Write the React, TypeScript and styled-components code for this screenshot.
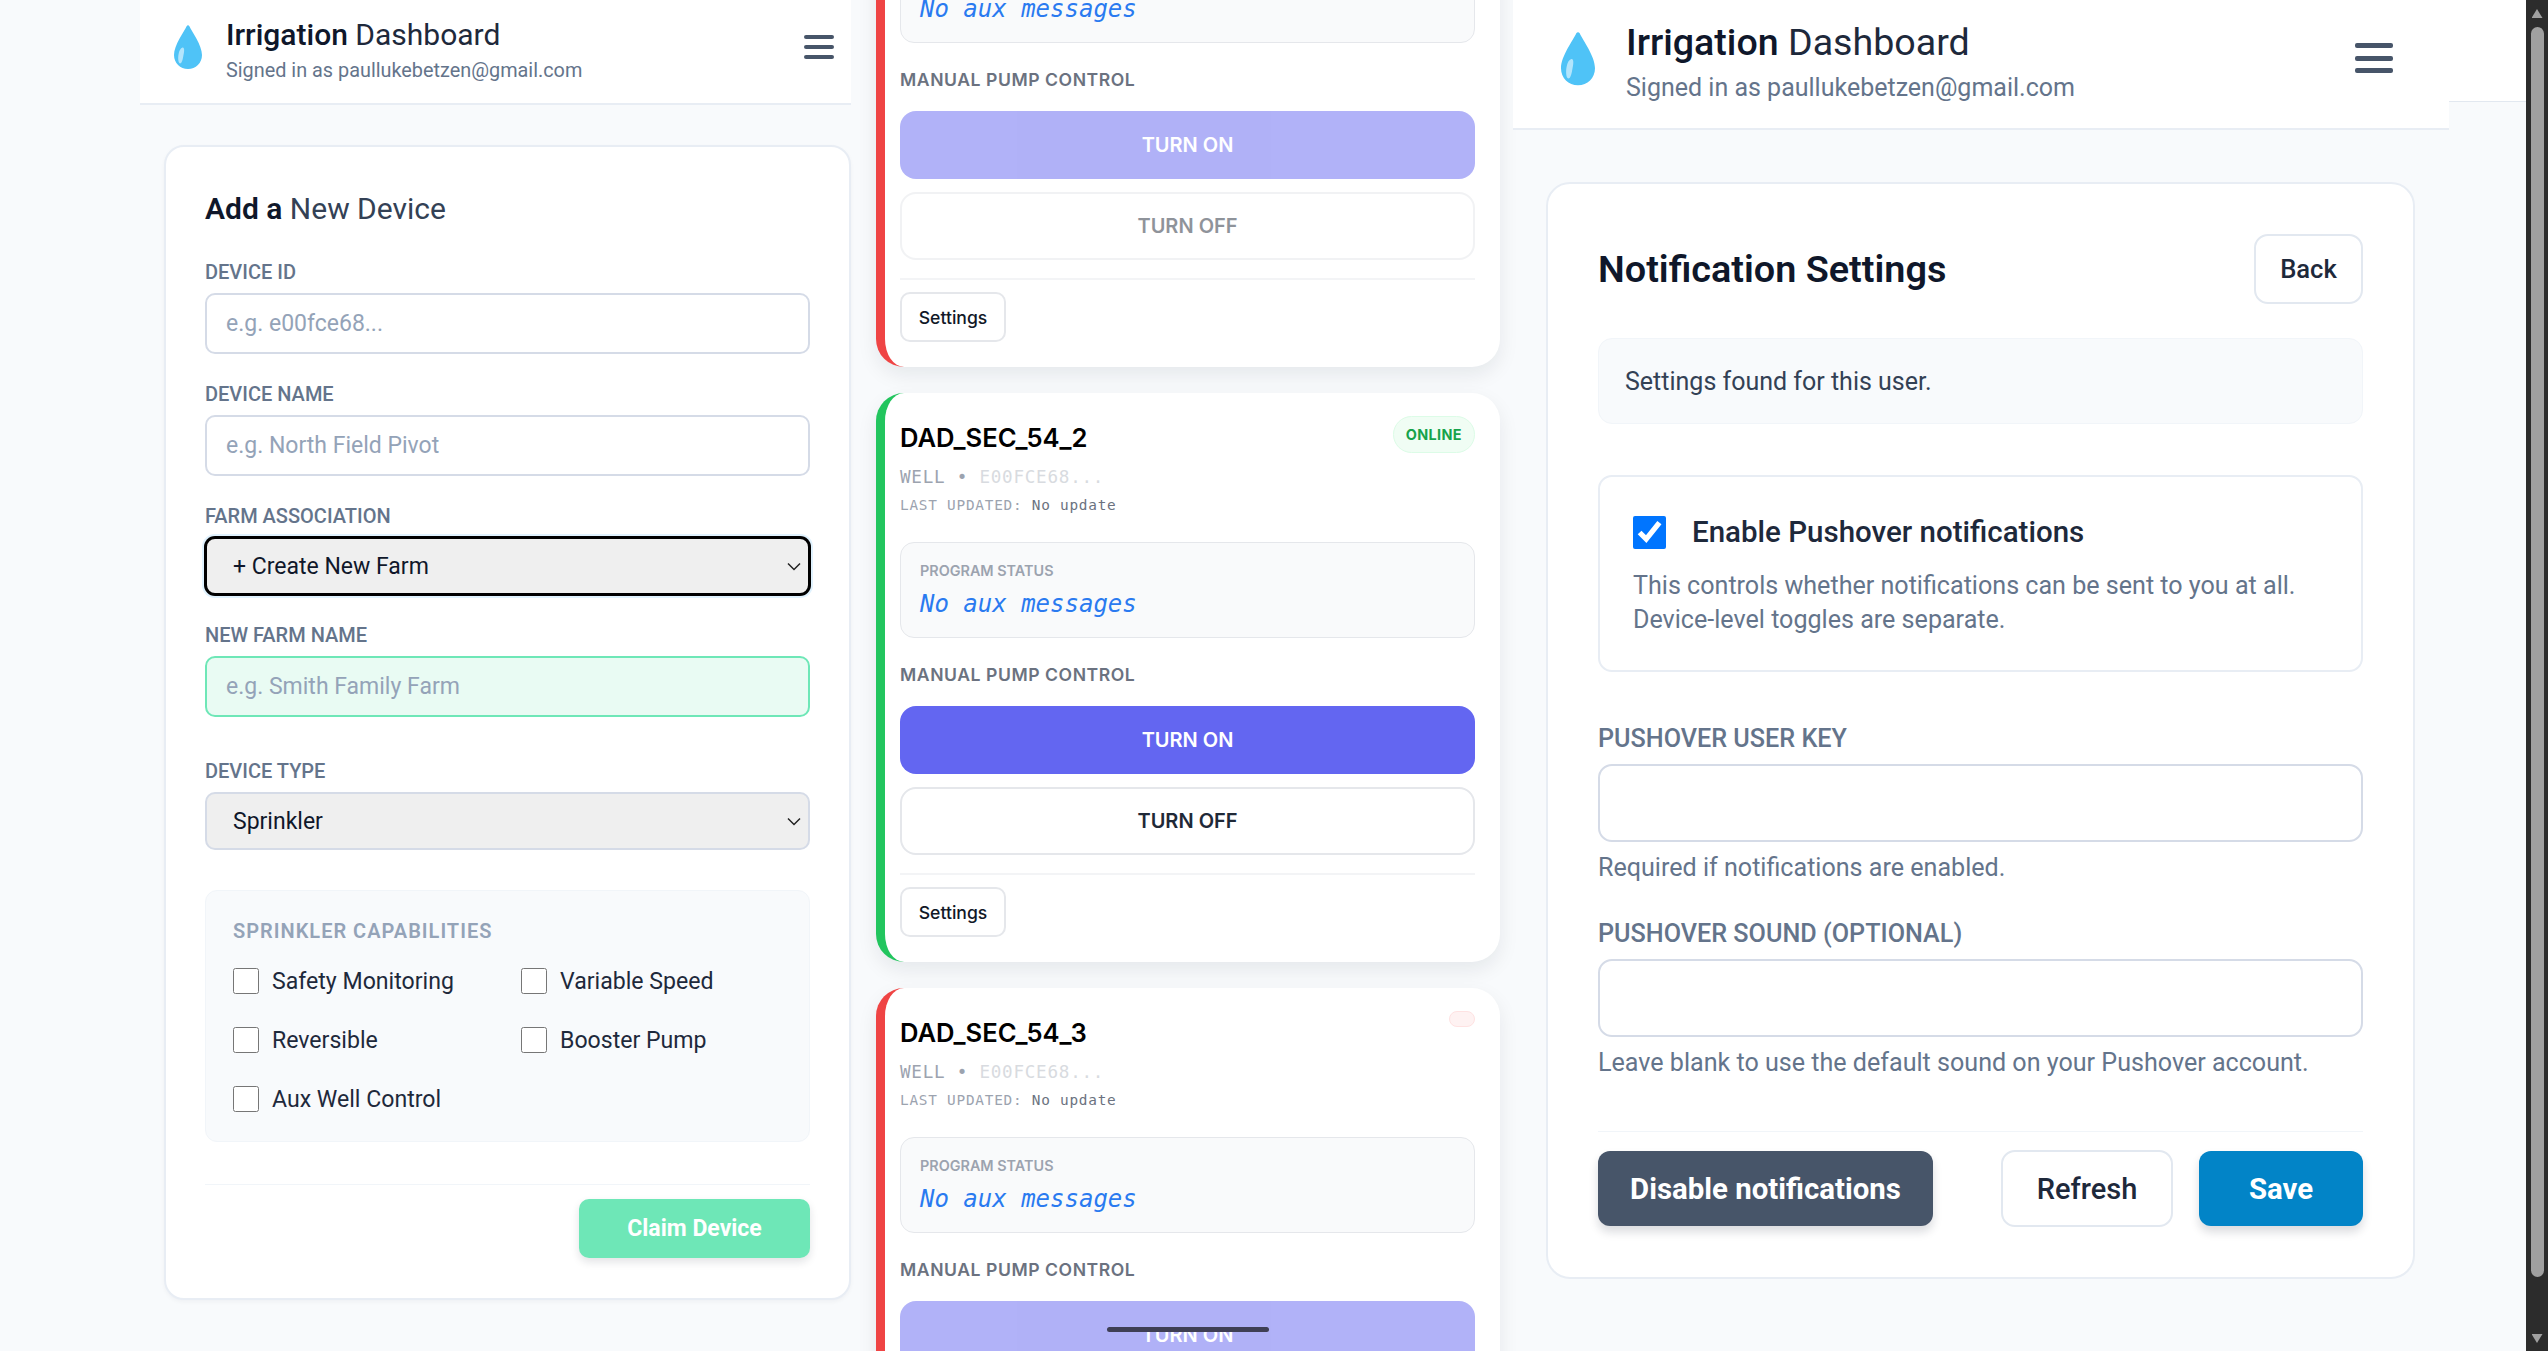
import React from 'react';
import styled, { createGlobalStyle } from 'styled-components';

const GlobalStyle = createGlobalStyle`
  html, body {
    margin: 0;
    height: 100%;
    overflow: hidden;
    background: #f8fafc;
    font-family: Roboto, "Liberation Sans", sans-serif;
  }
  * { box-sizing: border-box; }
`;

const chevron =
  "url(\"data:image/svg+xml,%3Csvg xmlns='http://www.w3.org/2000/svg' width='14' height='9' viewBox='0 0 14 9'%3E%3Cpath d='M1 1.5l6 6 6-6' fill='none' stroke='%23222' stroke-width='1.5'/%3E%3C/svg%3E\")";

const Page = styled.div`
  position: relative;
  display: flex;
  width: 2548px;
  height: 1351px;
  overflow: hidden;
  background: #f8fafc;
`;

const LeftColumn = styled.div`
  width: 711px;
  margin-left: 140px;
  flex: none;
`;

const MiddleColumn = styled.div`
  width: 624px;
  margin-left: 25px;
  margin-top: -202px;
  flex: none;
  display: flex;
  flex-direction: column;
  gap: 26px;
`;

const RightColumn = styled.div`
  width: 936px;
  margin-left: 13px;
  flex: none;
`;

const TopStrip = styled.div`
  flex: 1;
  height: 102px;
  background: #fff;
  border-bottom: 1px solid #e2e8f0;
`;

const Scrollbar = styled.div`
  width: 22px;
  flex: none;
  padding-top: 9px;
  background: #2c2c2c;
  display: flex;
  flex-direction: column;
  align-items: center;
`;

const ScrollArrow = styled.div<{ $down?: boolean }>`
  width: 11px;
  height: 9px;
  background: #a0a0a0;
  clip-path: ${({ $down }) => ($down ? 'polygon(0 0, 100% 0, 50% 100%)' : 'polygon(50% 0, 100% 100%, 0 100%)')};
`;

const ScrollThumb = styled.div`
  width: 13px;
  height: 1250px;
  margin: 9px 0 57px;
  border-radius: 7px;
  background: #a0a0a0;
`;

const Header = styled.header<{ $large?: boolean }>`
  display: flex;
  align-items: center;
  height: ${({ $large }) => ($large ? 130 : 105)}px;
  padding: ${({ $large }) => ($large ? '0 56px 12px 48px' : '0 17px 10px 34px')};
  gap: ${({ $large }) => ($large ? 31 : 24)}px;
  background: #fff;
  border-bottom: 2px solid #e8edf4;
`;

const DropIcon = styled.svg<{ $large?: boolean }>`
  flex: none;
  width: ${({ $large }) => ($large ? 34 : 28)}px;
  height: ${({ $large }) => ($large ? 55 : 44)}px;
`;

const Brand = styled.div<{ $large?: boolean }>`
  flex: 1;
  margin-top: 8px;
`;

const BrandTitle = styled.div<{ $large?: boolean }>`
  font-size: ${({ $large }) => ($large ? 37.6 : 30)}px;
  line-height: ${({ $large }) => ($large ? 48 : 38)}px;
  color: #1e293b;
  b { font-weight: 500; color: #0f172a; }
`;

const BrandSub = styled.div<{ $large?: boolean }>`
  margin-top: ${({ $large }) => ($large ? 4 : 3)}px;
  font-size: ${({ $large }) => ($large ? 25 : 19.85)}px;
  line-height: ${({ $large }) => ($large ? 36 : 28)}px;
  color: #64748b;
`;

const MenuIcon = styled.div<{ $large?: boolean }>`
  display: flex;
  flex-direction: column;
  justify-content: space-between;
  width: ${({ $large }) => ($large ? 38 : 30)}px;
  height: ${({ $large }) => ($large ? 30 : 24)}px;
  span {
    height: ${({ $large }) => ($large ? 5 : 4)}px;
    border-radius: 2px;
    background: #475569;
  }
`;

const FormCard = styled.section`
  margin: 40px 0 0 24px;
  padding: 40px 39px;
  background: #fff;
  border: 2px solid #e8edf4;
  border-radius: 20px;
  box-shadow: 0 2px 4px rgba(15, 23, 42, 0.04);
`;

const FormTitle = styled.h2`
  margin: 0 0 29px;
  font-size: 30px;
  line-height: 44px;
  font-weight: 400;
  color: #334155;
  b { font-weight: 600; color: #0f172a; }
`;

const Field = styled.div<{ $gap?: number }>`
  margin-bottom: ${({ $gap }) => $gap ?? 28}px;
`;

const Label = styled.label`
  display: block;
  margin-bottom: 9px;
  font-size: 20px;
  line-height: 24px;
  font-weight: 500;
  color: #64748b;
`;

const TextInput = styled.input<{ $tint?: boolean }>`
  display: block;
  width: 100%;
  height: 61px;
  padding: 0 19px;
  font: 400 23px Roboto, sans-serif;
  background: ${({ $tint }) => ($tint ? '#e9fbf3' : '#fff')};
  border: 2px solid ${({ $tint }) => ($tint ? '#6ee7b7' : '#d5dbe7')};
  border-radius: 10px;
  &::placeholder { color: #94a3b8; opacity: 1; }
`;

const Select = styled.select<{ $focused?: boolean }>`
  display: block;
  width: 100%;
  height: 58px;
  padding: 0 26px;
  font: 400 23px Roboto, sans-serif;
  color: #0f172a;
  appearance: none;
  background: #efefef ${chevron} no-repeat right 7px center;
  border: 2px solid ${({ $focused }) => ($focused ? '#000' : '#d5dbe7')};
  border-radius: 10px;
  box-shadow: ${({ $focused }) => ($focused ? '0 0 0 1px #000, 0 0 0 3px #e0f2fe' : 'none')};
`;

const CapabilityBox = styled.div`
  padding: 27px 27px 29px;
  background: #f8fafc;
  border: 1px solid #f1f5f9;
  border-radius: 12px;
`;

const CapabilityTitle = styled.div`
  margin-bottom: 24px;
  font-size: 20px;
  line-height: 26px;
  font-weight: 600;
  letter-spacing: 1px;
  color: #94a3b8;
`;

const CapabilityGrid = styled.div`
  display: grid;
  grid-template-columns: 262px 262px;
  column-gap: 26px;
  row-gap: 33px;
`;

const CheckRow = styled.label`
  display: flex;
  align-items: center;
  gap: 13px;
  height: 26px;
  font-size: 23.1px;
  color: #1e293b;
  input { width: 26px; height: 26px; margin: 0; }
`;

const FormFooter = styled.div`
  display: flex;
  justify-content: flex-end;
  margin-top: 42px;
  padding-top: 14px;
  border-top: 1px solid #f1f5f9;
`;

const ClaimButton = styled.button`
  width: 231px;
  height: 59px;
  border: 0;
  border-radius: 10px;
  background: #6ee7b7;
  color: #fff;
  font: 700 23px Roboto, sans-serif;
  box-shadow: 0 4px 8px rgba(15, 23, 42, 0.12);
`;

const DeviceCard = styled.article<{ $online?: boolean }>`
  padding: 24px 25px 25px 15px;
  background: #fff;
  border-left: 9px solid ${({ $online }) => ($online ? '#22c55e' : '#ef4444')};
  border-radius: 28px;
  box-shadow: 0 8px 20px rgba(15, 23, 42, 0.08);
`;

const DeviceTop = styled.div`
  display: flex;
  justify-content: space-between;
  align-items: flex-start;
  height: 42px;
`;

const DeviceName = styled.h3`
  margin: 0;
  font: 600 25.6px/42px Inter, sans-serif;
  color: #000;
`;

const Badge = styled.span<{ $online?: boolean }>`
  min-height: 15px;
  margin-top: -1px;
  padding: 7px 12px;
  font: 700 14.4px/21px Inter, sans-serif;
  letter-spacing: 0.4px;
  color: #16a34a;
  background: ${({ $online }) => ($online ? '#f0fdf4' : '#fef2f2')};
  border: 1px solid ${({ $online }) => ($online ? '#dcfce7' : '#fee2e2')};
  border-radius: 999px;
`;

const DeviceMeta = styled.div`
  margin-top: 6px;
  font: 400 17.6px/24px "DejaVu Sans Mono", monospace;
  letter-spacing: 0.75px;
  color: #9ca3af;
  span { color: #d8dbe0; }
`;

const DeviceUpdated = styled.div`
  margin-top: 6px;
  font: 400 14.4px/20px "DejaVu Sans Mono", monospace;
  letter-spacing: 0.75px;
  color: #9ca3af;
  span { color: #6b7280; }
`;

const StatusBox = styled.div`
  margin-top: 27px;
  padding: 18px 19px;
  background: #f9fafb;
  border: 1px solid #e5e7eb;
  border-radius: 14px;
`;

const StatusLabel = styled.div`
  font: 600 14.4px/20px Inter, sans-serif;
  color: #9ca3af;
`;

const StatusText = styled.div`
  margin-top: 8px;
  font: italic 400 24px/30px "DejaVu Sans Mono", monospace;
  color: #2a7af0;
`;

const ControlTitle = styled.div`
  margin: 27px 0 21px;
  font: 600 17.6px/20px Inter, sans-serif;
  letter-spacing: 0.55px;
  color: #6b7280;
`;

const PumpOn = styled.button<{ $dim?: boolean }>`
  display: block;
  width: 100%;
  height: 68px;
  border: 0;
  border-radius: 16px;
  background: #6366f1;
  opacity: ${({ $dim }) => ($dim ? 0.5 : 1)};
  color: #fff;
  font: 600 20px Inter, sans-serif;
`;

const PumpOff = styled.button<{ $dim?: boolean }>`
  display: block;
  width: 100%;
  height: 68px;
  margin-top: 13px;
  background: #fff;
  border: 2px solid #e5e7eb;
  border-radius: 16px;
  color: #1f2937;
  opacity: ${({ $dim }) => ($dim ? 0.5 : 1)};
  font: 600 20px Inter, sans-serif;
`;

const DeviceFooter = styled.div`
  margin-top: 18px;
  padding-top: 12px;
  border-top: 2px solid #f3f4f6;
`;

const SettingsButton = styled.button`
  display: block;
  width: 106px;
  height: 50px;
  background: #fff;
  border: 2px solid #e5e7eb;
  border-radius: 10px;
  color: #111827;
  font: 500 17.6px Inter, sans-serif;
`;

const SettingsCard = styled.section`
  width: 869px;
  margin: 52px 0 0 33px;
  padding: 50px;
  background: #fff;
  border: 2px solid #e8edf4;
  border-radius: 24px;
`;

const SettingsHead = styled.div`
  display: flex;
  justify-content: space-between;
  align-items: center;
`;

const SettingsTitle = styled.h2`
  margin: 0;
  font-size: 37.8px;
  font-weight: 600;
  color: #0f172a;
`;

const GhostButton = styled.button<{ $wide?: boolean }>`
  width: ${({ $wide }) => ($wide ? 172 : 109)}px;
  height: ${({ $wide }) => ($wide ? 77 : 70)}px;
  background: #fff;
  border: 2px solid #e2e8f0;
  border-radius: 14px;
  color: #1e293b;
  font: 500 ${({ $wide }) => ($wide ? 29 : 25.6)}px Roboto, sans-serif;
`;

const InfoBox = styled.div`
  margin-top: 34px;
  height: 86px;
  padding: 0 26px;
  display: flex;
  align-items: center;
  background: #f8fafc;
  border: 1px solid #f1f5f9;
  border-radius: 14px;
  font-size: 25px;
  color: #334155;
`;

const EnableBox = styled.div`
  margin-top: 51px;
  padding: 38px 33px 33px;
  border: 2px solid #e8edf4;
  border-radius: 14px;
`;

const EnableRow = styled.label`
  display: flex;
  align-items: center;
  gap: 26px;
  font-size: 29.5px;
  font-weight: 500;
  color: #1e293b;
  input { width: 33px; height: 33px; margin: 0; }
`;

const EnableHint = styled.p`
  margin: 20px 0 0;
  font-size: 25.1px;
  line-height: 34px;
  color: #64748b;
`;

const BigLabel = styled.label<{ $top?: number }>`
  display: block;
  margin: ${({ $top }) => $top ?? 52}px 0 10px;
  font-size: 25.2px;
  line-height: 30px;
  font-weight: 500;
  color: #64748b;
`;

const BigInput = styled.input`
  display: block;
  width: 100%;
  height: 78px;
  background: #fff;
  border: 2px solid #d5dbe7;
  border-radius: 14px;
`;

const Help = styled.div`
  margin-top: 12px;
  font-size: 25.1px;
  line-height: 28px;
  color: #64748b;
`;

const ActionRow = styled.div`
  display: flex;
  justify-content: space-between;
  align-items: center;
  margin-top: 54px;
  padding-top: 18px;
  border-top: 1px solid #f1f5f9;
`;

const ActionGroup = styled.div`
  display: flex;
  align-items: center;
  gap: 26px;
`;

const SolidButton = styled.button<{ $tone: string; $width: number }>`
  width: ${({ $width }) => $width}px;
  height: 75px;
  border: 0;
  border-radius: 12px;
  background: ${({ $tone }) => $tone};
  color: #fff;
  font: 700 29.4px Roboto, sans-serif;
  box-shadow: 0 6px 10px rgba(15, 23, 42, 0.15);
`;

const HomeBar = styled.div`
  position: absolute;
  left: 1107px;
  top: 1327px;
  width: 162px;
  height: 5px;
  border-radius: 3px;
  background: #3f3f55;
`;

const Drop = ({ large }: { large?: boolean }) => (
  <DropIcon $large={large} viewBox="0 0 28 44">
    <path d="M12.6 1.2C13.3 0 14.7 0 15.4 1.2C18 7 28 20 28 30C28 38 21.8 44 14 44C6.2 44 0 38 0 30C0 20 10 7 12.6 1.2Z" fill="#4fc3f7" />
    <path d="M8.5 22.5C10.5 22 10.5 26 9.5 30C8.8 34 8 38.5 6 38.5C4.2 38 3.8 33 4.6 29C5.2 25.5 6.6 23 8.5 22.5Z" fill="#b3e5fc" />
  </DropIcon>
);

const Menu = ({ large }: { large?: boolean }) => (
  <MenuIcon $large={large}>
    <span />
    <span />
    <span />
  </MenuIcon>
);

const capabilities = ['Safety Monitoring', 'Variable Speed', 'Reversible', 'Booster Pump', 'Aux Well Control'];

const Device = ({ name, online }: { name: string; online?: boolean }) => (
  <DeviceCard $online={online}>
    <DeviceTop>
      <DeviceName>{name}</DeviceName>
      <Badge $online={online}>{online ? 'ONLINE' : ''}</Badge>
    </DeviceTop>
    <DeviceMeta>
      WELL • <span>E00FCE68...</span>
    </DeviceMeta>
    <DeviceUpdated>
      LAST UPDATED: <span>No update</span>
    </DeviceUpdated>
    <StatusBox>
      <StatusLabel>PROGRAM STATUS</StatusLabel>
      <StatusText>No aux messages</StatusText>
    </StatusBox>
    <ControlTitle>MANUAL PUMP CONTROL</ControlTitle>
    <PumpOn $dim={!online}>TURN ON</PumpOn>
    <PumpOff $dim={!online}>TURN OFF</PumpOff>
    <DeviceFooter>
      <SettingsButton>Settings</SettingsButton>
    </DeviceFooter>
  </DeviceCard>
);

const App = () => {
  return (
    <Page>
      <GlobalStyle />
      <LeftColumn>
        <Header>
          <Drop />
          <Brand>
            <BrandTitle>
              <b>Irrigation</b> Dashboard
            </BrandTitle>
            <BrandSub>Signed in as paullukebetzen@gmail.com</BrandSub>
          </Brand>
          <Menu />
        </Header>
        <FormCard>
          <FormTitle>
            <b>Add a</b> New Device
          </FormTitle>
          <Field>
            <Label>DEVICE ID</Label>
            <TextInput placeholder="e.g. e00fce68..." />
          </Field>
          <Field>
            <Label>DEVICE NAME</Label>
            <TextInput placeholder="e.g. North Field Pivot" />
          </Field>
          <Field>
            <Label>FARM ASSOCIATION</Label>
            <Select $focused defaultValue="new">
              <option value="new">+ Create New Farm</option>
            </Select>
          </Field>
          <Field $gap={42}>
            <Label>NEW FARM NAME</Label>
            <TextInput $tint placeholder="e.g. Smith Family Farm" />
          </Field>
          <Field $gap={40}>
            <Label>DEVICE TYPE</Label>
            <Select defaultValue="sprinkler">
              <option value="sprinkler">Sprinkler</option>
            </Select>
          </Field>
          <CapabilityBox>
            <CapabilityTitle>SPRINKLER CAPABILITIES</CapabilityTitle>
            <CapabilityGrid>
              {capabilities.map((c) => (
                <CheckRow key={c}>
                  <input type="checkbox" />
                  {c}
                </CheckRow>
              ))}
            </CapabilityGrid>
          </CapabilityBox>
          <FormFooter>
            <ClaimButton>Claim Device</ClaimButton>
          </FormFooter>
        </FormCard>
      </LeftColumn>
      <MiddleColumn>
        <Device name="DAD_SEC_54_1" />
        <Device name="DAD_SEC_54_2" online />
        <Device name="DAD_SEC_54_3" />
      </MiddleColumn>
      <RightColumn>
        <Header $large>
          <Drop large />
          <Brand>
            <BrandTitle $large>
              <b>Irrigation</b> Dashboard
            </BrandTitle>
            <BrandSub $large>Signed in as paullukebetzen@gmail.com</BrandSub>
          </Brand>
          <Menu large />
        </Header>
        <SettingsCard>
          <SettingsHead>
            <SettingsTitle>Notification Settings</SettingsTitle>
            <GhostButton>Back</GhostButton>
          </SettingsHead>
          <InfoBox>Settings found for this user.</InfoBox>
          <EnableBox>
            <EnableRow>
              <input type="checkbox" defaultChecked />
              Enable Pushover notifications
            </EnableRow>
            <EnableHint>
              This controls whether notifications can be sent to you at all.
              <br />
              Device-level toggles are separate.
            </EnableHint>
          </EnableBox>
          <BigLabel>PUSHOVER USER KEY</BigLabel>
          <BigInput />
          <Help>Required if notifications are enabled.</Help>
          <BigLabel $top={37}>PUSHOVER SOUND (OPTIONAL)</BigLabel>
          <BigInput />
          <Help>Leave blank to use the default sound on your Pushover account.</Help>
          <ActionRow>
            <SolidButton $tone="#475569" $width={335}>
              Disable notifications
            </SolidButton>
            <ActionGroup>
              <GhostButton $wide>Refresh</GhostButton>
              <SolidButton $tone="#0284c7" $width={164}>
                Save
              </SolidButton>
            </ActionGroup>
          </ActionRow>
        </SettingsCard>
      </RightColumn>
      <TopStrip />
      <Scrollbar>
        <ScrollArrow />
        <ScrollThumb />
        <ScrollArrow $down />
      </Scrollbar>
      <HomeBar />
    </Page>
  );
};

export default App;
